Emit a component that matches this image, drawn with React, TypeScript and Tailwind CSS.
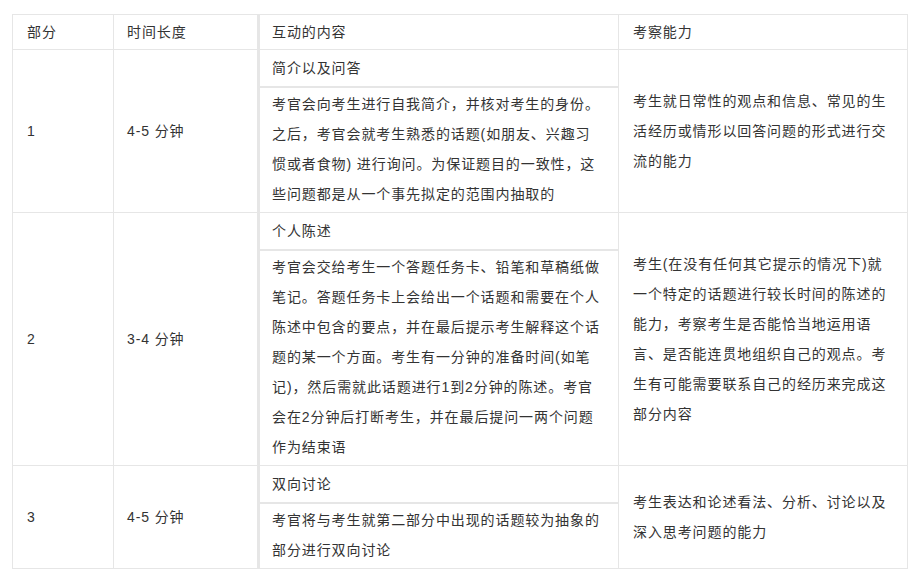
const ROWS = [
  {
    part: '1',
    time: '4-5 分钟',
    title: '简介以及问答',
    body: '考官会向考生进行自我简介，并核对考生的身份。之后，考官会就考生熟悉的话题(如朋友、兴趣习惯或者食物) 进行询问。为保证题目的一致性，这些问题都是从一个事先拟定的范围内抽取的',
    skill: '考生就日常性的观点和信息、常见的生活经历或情形以回答问题的形式进行交流的能力',
  },
  {
    part: '2',
    time: '3-4 分钟',
    title: '个人陈述',
    body: '考官会交给考生一个答题任务卡、铅笔和草稿纸做笔记。答题任务卡上会给出一个话题和需要在个人陈述中包含的要点，并在最后提示考生解释这个话题的某一个方面。考生有一分钟的准备时间(如笔记)，然后需就此话题进行1到2分钟的陈述。考官会在2分钟后打断考生，并在最后提问一两个问题作为结束语',
    skill: '考生(在没有任何其它提示的情况下)就一个特定的话题进行较长时间的陈述的能力，考察考生是否能恰当地运用语言、是否能连贯地组织自己的观点。考生有可能需要联系自己的经历来完成这部分内容',
  },
  {
    part: '3',
    time: '4-5 分钟',
    title: '双向讨论',
    body: '考官将与考生就第二部分中出现的话题较为抽象的部分进行双向讨论',
    skill: '考生表达和论述看法、分析、讨论以及深入思考问题的能力',
  },
];

export default function App() {
  return (
    <div className="w-[920px] h-[579px] bg-white pt-[14px] pl-[12px] text-[14px] leading-[30px] tracking-[0.9px] text-[#333] font-['Liberation_Sans','Noto_Sans_CJK_SC',sans-serif]">
      <table className="border-collapse table-fixed w-[895px]">
        <colgroup>
          <col className="w-[101px]" />
          <col className="w-[145px]" />
          <col className="w-[360px]" />
          <col className="w-[289px]" />
        </colgroup>
        <thead>
          <tr>
            <td className="border border-[#e6e6e6] px-[14px] py-[2px] text-left font-normal">部分</td>
            <td className="border border-[#e6e6e6] px-[13px] py-[2px] text-left font-normal">时间长度</td>
            <td className="border border-[#e6e6e6] border-l-[3px] pl-[12px] pr-[14px] py-[2px] text-left font-normal">互动的内容</td>
            <td className="border border-[#e6e6e6] px-[14px] py-[2px] text-left font-normal">考察能力</td>
          </tr>
        </thead>
        <tbody>
          {ROWS.map((row) => (
            <tr key={row.part}>
              <td className="border border-[#e6e6e6] px-[14px] align-middle">{row.part}</td>
              <td className="border border-[#e6e6e6] px-[13px] align-middle">{row.time}</td>
              <td className="border border-[#e6e6e6] border-l-[3px] p-0 align-top">
                <div className="flex flex-col">
                  <div className="pl-[12px] pr-[14px] pt-[3px] pb-[3px] border-b-2 border-[#e6e6e6]">{row.title}</div>
                  <div className="pl-[12px] pr-[14px] pt-[1px] pb-[3px]">{row.body}</div>
                </div>
              </td>
              <td className="border border-[#e6e6e6] px-[14px] align-middle">{row.skill}</td>
            </tr>
          ))}
        </tbody>
      </table>
    </div>
  );
}
